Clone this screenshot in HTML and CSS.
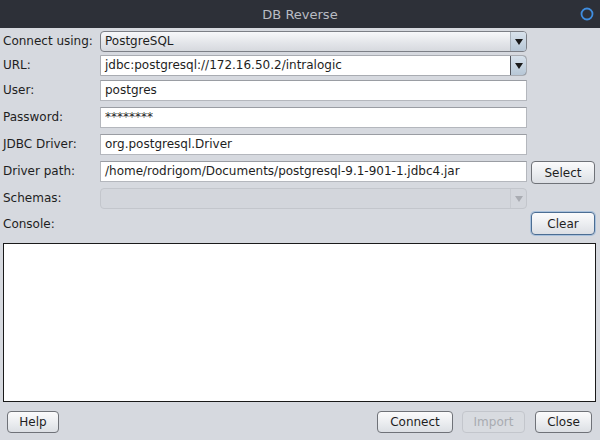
FILE: index.html
```html
<!DOCTYPE html>
<html>
<head>
<meta charset="utf-8">
<link rel="stylesheet" href="styles.css">
</head>
<body>
<div class="window">
  <div class="titlebar">
    <span class="title">DB Reverse</span>
    <svg class="close-ring" width="14" height="14" viewBox="0 0 14 14"><circle cx="7" cy="7" r="5.5" fill="none" stroke="#3f8ddf" stroke-width="1.8"/></svg>
  </div>
  <div class="form">
    <label class="lbl">Connect using:</label>
    <div class="combo"><span class="combo-text">PostgreSQL</span><span class="arrow"><svg width="8" height="6" viewBox="0 0 8 6"><path d="M0 0H8L4 6Z" fill="#1a1a1a"/></svg></span></div>
    <div></div>

    <label class="lbl">URL:</label>
    <div class="combo editable"><span class="combo-text">jdbc:postgresql://172.16.50.2/intralogic</span><span class="arrow"><svg width="8" height="6" viewBox="0 0 8 6"><path d="M0 0H8L4 6Z" fill="#1a1a1a"/></svg></span></div>
    <div></div>

    <label class="lbl">User:</label>
    <div class="field">postgres</div>
    <div></div>

    <label class="lbl">Password:</label>
    <div class="field pwd">********</div>
    <div></div>

    <label class="lbl">JDBC Driver:</label>
    <div class="field">org.postgresql.Driver</div>
    <div></div>

    <label class="lbl">Driver path:</label>
    <div class="field">/home/rodrigom/Documents/postgresql-9.1-901-1.jdbc4.jar</div>
    <button class="btn side">Select</button>

    <label class="lbl">Schemas:</label>
    <div class="combo disabled"><span class="combo-text"></span><span class="arrow"><svg width="8" height="6" viewBox="0 0 8 6"><path d="M0 0H8L4 6Z" fill="#a9acb2"/></svg></span></div>
    <div></div>

    <label class="lbl console-lbl">Console:</label>
    <div></div>
    <button class="btn side focused">Clear</button>
  </div>
  <div class="console"></div>
  <div class="footer">
    <button class="btn help">Help</button>
    <div class="spacer"></div>
    <button class="btn connect">Connect</button>
    <button class="btn import" disabled>Import</button>
    <button class="btn closeb">Close</button>
  </div>
</div>
</body>
</html>
```

FILE: styles.css
```css
* { box-sizing: border-box; }
html, body {
  margin: 0;
  padding: 0;
  width: 600px;
  height: 440px;
  background: #d6d9df;
  font-family: "DejaVu Sans", sans-serif;
  font-size: 12px;
  color: #1e1e1e;
}
.window {
  width: 600px;
  height: 440px;
  display: flex;
  flex-direction: column;
}
.titlebar {
  height: 28px;
  background: #2d3038;
  display: flex;
  align-items: center;
  justify-content: center;
  position: relative;
}
.title {
  color: #b9bcc3;
  font-size: 13px;
}
.close-ring {
  position: absolute;
  right: 6px;
  top: 7px;
}
.form {
  display: grid;
  grid-template-columns: 93px 427px 64px;
  grid-template-rows: 24px 25px 27px 27px 27px 27px 24px 28px;
  column-gap: 4px;
  padding: 3px 5px 0 3px;
}
.lbl {
  line-height: 21px;
  white-space: nowrap;
}
.console-lbl { line-height: 25px; }
.field {
  height: 21px;
  background: #fff;
  border: 1px solid #b4b7bd;
  border-top-color: #9a9da3;
  padding: 0 4px;
  line-height: 19px;
  white-space: nowrap;
  overflow: hidden;
}
.pwd { font-size: 12px; }
.combo {
  height: 21px;
  display: flex;
  border: 1px solid #7c7f86;
  border-radius: 4px;
  background: linear-gradient(#f7f8fa, #e4e6ea 55%, #d6d9de);
  overflow: hidden;
}
.combo-text {
  flex: 1;
  padding: 0 4px;
  line-height: 19px;
  white-space: nowrap;
}
.combo.editable {
  border-radius: 0 4px 4px 0;
  border-color: #a9acb2;
}
.combo.editable .combo-text {
  background: #fff;
}
.arrow {
  width: 16px;
  display: flex;
  align-items: center;
  justify-content: center;
  background: linear-gradient(#d8e2ec, #b7c7d6);
  border-left: 1px solid #a7b0ba;
}
.combo.editable .arrow {
  border: 1px solid #4f5259;
  border-radius: 0 4px 4px 0;
  margin: -1px -1px -1px 0;
  width: 17px;
}
.combo.disabled {
  background: #d3d6dc;
  border-color: #c3c6cc;
}
.combo.disabled .arrow {
  background: transparent;
  border-left: 1px solid #c7cad0;
}
.btn {
  font-family: "DejaVu Sans", sans-serif;
  font-size: 12px;
  color: #1e1e1e;
  background: linear-gradient(#fbfbfc, #eceef1 50%, #dcdfe4);
  border: 1px solid #6f7278;
  border-radius: 4px;
  padding: 0;
  height: 23px;
}
.side { width: 64px; }
.focused {
  border-color: #4b6d93;
  box-shadow: 0 0 0 1px #a9c1dc;
}
.console {
  margin: 3px 4px 0 3px;
  height: 159px;
  background: #fff;
  border: 1px solid #1a1a1a;
}
.footer {
  display: flex;
  align-items: center;
  padding: 9px 8px 0 7px;
  gap: 9px;
}
.footer .btn { height: 22px; }
.spacer { flex: 1; }
.help { width: 52px; }
.connect { width: 76px; }
.import {
  width: 63px;
  color: #a8abb1;
  border-color: #c3c6cc;
  background: #d8dbe0;
}
.closeb { width: 57px; margin-left: 1px; }
```
